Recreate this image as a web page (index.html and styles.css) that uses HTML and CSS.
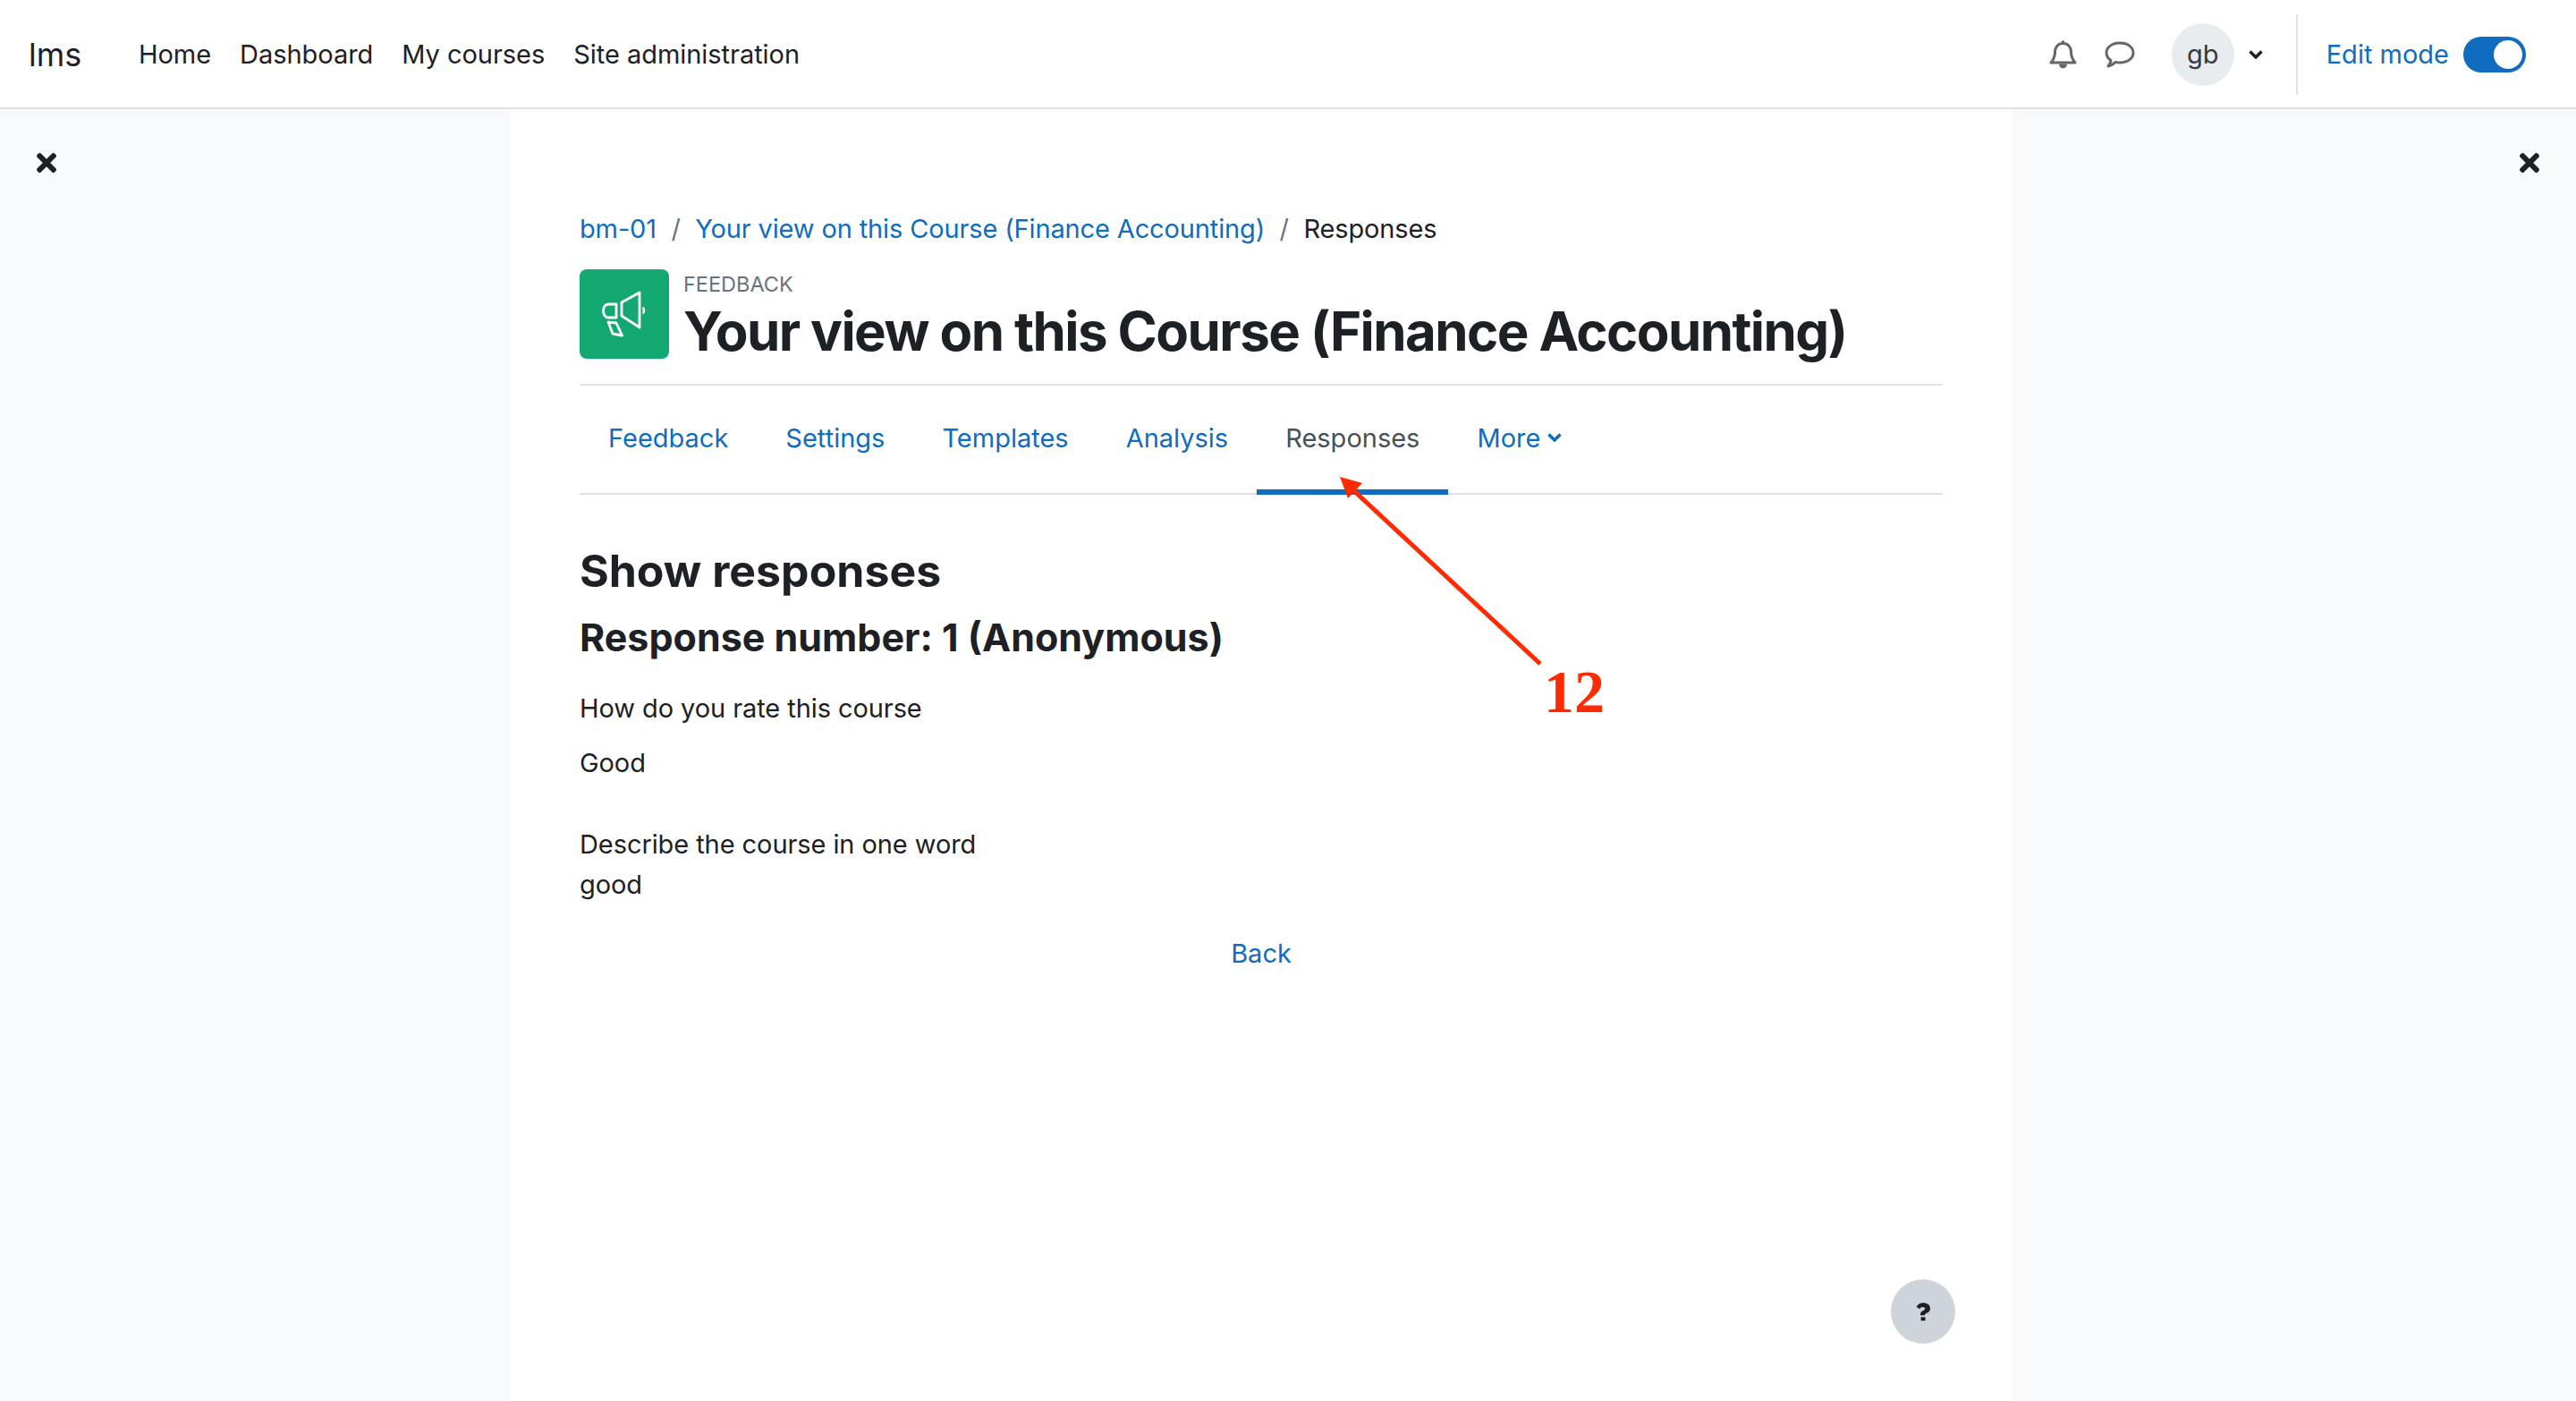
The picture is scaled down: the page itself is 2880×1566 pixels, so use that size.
FILE: index.html
```html
<!DOCTYPE html>
<html lang="en">
<head>
    <meta charset="UTF-8">
    <title>Your view on this Course (Finance Accounting)</title>
    <link rel="stylesheet" href="styles.css">
</head>
<body>
    <header class="navbar">
        <a class="brand">lms</a>
        <nav class="primary-nav">
            <a>Home</a>
            <a>Dashboard</a>
            <a>My courses</a>
            <a>Site administration</a>
        </nav>
        <div class="nav-right">
            <svg class="bell" viewBox="0 0 30 34"><path d="M15 1.500v3M15 4.500c-5.500 0-9 4-9 9.500 0 6-1.500 8.500-4.500 12h27c-3-3.500-4.500-6-4.500-12 0-5.500-3.500-9.500-9-9.500z" fill="none" stroke="#666" stroke-width="3" stroke-linejoin="round"/><path d="M10.500 27.500a4.500 5 0 0 0 9 0z" fill="#666"/></svg>
            <svg class="chat" viewBox="0 0 34 30"><path d="M17 2c8.500 0 15 4.600 15 11s-6.500 11-15 11c-1.700 0-3.300-.2-4.800-.6C10 25.600 7.500 27.300 4 28c1.500-1.800 2.700-3.800 3-6.500C3.900 19.500 2 16.500 2 13 2 6.600 8.500 2 17 2z" fill="none" stroke="#666" stroke-width="3" stroke-linejoin="round"/></svg>
            <div class="avatar">gb</div>
            <svg class="caret" viewBox="0 0 16 10"><path d="M1.500 1.500l6.500 6.500 6.500-6.500" fill="none" stroke="#1d2125" stroke-width="3.400"/></svg>
            <div class="divider"></div>
            <a class="edit-label">Edit mode</a>
            <div class="toggle"><span class="knob"></span></div>
        </div>
    </header>

    <div class="page">
        <aside class="drawer">
            <svg class="close-icon" viewBox="0 0 352 512"><path d="M242.720 256l100.070-100.070c12.280-12.280 12.280-32.190 0-44.480l-22.240-22.240c-12.280-12.280-32.190-12.280-44.480 0L176 189.280 75.930 89.210c-12.280-12.280-32.190-12.280-44.480 0L9.210 111.450c-12.280 12.280-12.280 32.190 0 44.480L109.280 256 9.210 356.070c-12.280 12.280-12.280 32.190 0 44.480l22.240 22.240c12.280 12.280 32.200 12.280 44.480 0L176 322.720l100.070 100.070c12.280 12.280 32.200 12.280 44.480 0l22.240-22.240c12.280-12.280 12.280-32.190 0-44.480L242.720 256z"/></svg>
        </aside>

        <main class="content">
            <div class="breadcrumb">
                <a>bm-01</a>
                <span class="sep">/</span>
                <a>Your view on this Course (Finance Accounting)</a>
                <span class="sep">/</span>
                <span>Responses</span>
            </div>

            <div class="page-header">
                <div class="activity-icon">
                    <svg viewBox="0 0 100 100" fill="none" stroke="#fff" stroke-width="2.800" stroke-linejoin="round">
                        <path d="M41 39H32a5.500 7.500 0 0 0 0 15h9z"/>
                        <path d="M47 37L67 26V65L47 52z"/>
                        <path d="M70.500 41.500a5 5 0 0 1 0 9z" fill="#fff" stroke="none"/>
                        <path d="M32 59l9 1 6.500 14-10.500-2z"/>
                    </svg>
                </div>
                <div class="header-text">
                    <div class="modtype">FEEDBACK</div>
                    <h1>Your view on this Course (Finance Accounting)</h1>
                </div>
            </div>

            <nav class="tabs">
                <a>Feedback</a>
                <a>Settings</a>
                <a>Templates</a>
                <a>Analysis</a>
                <a class="active">Responses</a>
                <a class="more">More
                    <svg viewBox="0 0 16 10"><path d="M1.500 1.500l6.500 6.500 6.500-6.500" fill="none" stroke="#0f6cbf" stroke-width="3.400"/></svg>
                </a>
            </nav>

            <h2>Show responses</h2>
            <h3>Response number: 1 (Anonymous)</h3>
            <p class="question">How do you rate this course</p>
            <p class="answer">Good</p>
            <p class="question-2">Describe the course in one word</p>
            <p class="answer-2">good</p>
            <div class="back"><a>Back</a></div>

            <button class="help">
                <svg viewBox="0 0 18 24"><path d="M9.300 1C4.900 1 2.300 3 .7 6.100l4 2.800c.9-1.700 2-2.600 3.900-2.600 1.500 0 2.800.8 2.800 2 0 1.200-1 1.700-2.400 2.500-1.700 1-3.400 2.200-3.400 5v1h5.500v-.6c0-1.400 4.700-2.300 6.300-5.200.5-.9.600-1.800.6-2.700C18 3.300 13.700 1 9.300 1zM6.300 19v4.500h5.500V19z" fill="#1d2125"/></svg>
            </button>

            <svg class="annotation-arrow" viewBox="0 0 260 240">
                <path d="M226 212L16 17" stroke="#ff2a00" stroke-width="5" fill="none"/>
                <path d="M2 3L27 10 11 27z" fill="#ff2a00"/>
            </svg>
            <div class="annotation-num">12</div>
        </main>

        <aside class="drawer drawer-right">
            <svg class="close-icon" viewBox="0 0 352 512"><path d="M242.720 256l100.070-100.070c12.280-12.280 12.280-32.190 0-44.480l-22.240-22.240c-12.280-12.280-32.190-12.280-44.480 0L176 189.280 75.930 89.210c-12.280-12.280-32.190-12.280-44.480 0L9.210 111.450c-12.280 12.280-12.280 32.190 0 44.480L109.280 256 9.210 356.070c-12.280 12.280-12.280 32.190 0 44.480l22.240 22.240c12.280 12.280 32.200 12.280 44.480 0L176 322.720l100.070 100.070c12.280 12.280 32.200 12.280 44.480 0l22.240-22.240c12.280-12.280 12.280-32.190 0-44.480L242.720 256z"/></svg>
        </aside>
    </div>
</body>
</html>
```

FILE: styles.css
```css
* { box-sizing: border-box; }
body {
    margin: 0;
    height: 1566px;
    overflow: hidden;
    font-family: Inter, "Liberation Sans", sans-serif;
    font-size: 29px;
    color: #1d2125;
    background: #fff;
}
a { color: #0f6cbf; text-decoration: none; }

/* top bar */
.navbar {
    height: 122px;
    border-bottom: 2px solid #dee2e6;
    display: flex;
    align-items: center;
    padding: 1px 32px 0;
}
.brand { font-size: 36px; color: #1d2125; width: 123px; }
.primary-nav { display: flex; gap: 32px; letter-spacing: -0.04px; }
.primary-nav a { color: #1d2125; }
.nav-right { margin-left: auto; display: flex; align-items: center; }
.bell { width: 31px; height: 34px; margin-right: 31px; }
.chat { width: 34px; height: 30px; margin-right: 41px; }
.avatar {
    width: 70px;
    height: 70px;
    border-radius: 50%;
    background: #e9ecef;
    color: #343a40;
    display: flex;
    align-items: center;
    justify-content: center;
    margin-right: 16px;
}
.caret { width: 16px; height: 10px; margin-right: 37px; }
.divider { width: 2px; height: 90px; background: #dee2e6; margin-right: 32px; }
.edit-label { margin-right: 16px; }
.toggle {
    width: 70px;
    height: 40px;
    border-radius: 20px;
    background: #0f6cbf;
    display: flex;
    align-items: center;
    justify-content: flex-end;
    padding-right: 4px;
    margin-right: 24px;
}
.knob { width: 32px; height: 32px; border-radius: 50%; background: #fff; }

/* page columns */
.page { display: flex; height: 1444px; }
.drawer {
    width: 570px;
    background: #f8f9fa;
    padding: 44px 0 0 41px;
}
.drawer-right {
    width: 630px;
    padding-left: 567px;
}
.close-icon { width: 22px; height: 32px; fill: #1d2125; display: block; }
.content {
    position: relative;
    flex: 1;
    padding: 116px 78px 0;
}

/* breadcrumb + heading */
.breadcrumb { display: flex; gap: 16.5px; line-height: 36px; height: 36px; letter-spacing: -0.14px; }
.sep { color: #6a737b; }
.page-header { display: flex; margin-top: 27px; }
.activity-icon {
    width: 100px;
    height: 100px;
    border-radius: 8px;
    background: #13a772;
    margin-right: 16px;
}
.activity-icon svg { width: 100px; height: 100px; display: block; }
.modtype { font-size: 23.5px; color: #6a737b; line-height: 28px; margin-top: 3px; }
h1 { margin: 0; font-size: 60px; font-weight: 700; line-height: 70px; margin-top: 3px; letter-spacing: -1.6px; }
.tabs {
    display: flex;
    margin-top: 24px;
    border-top: 2px solid #dee2e6;
    border-bottom: 2px solid #dee2e6;
    height: 124px;
}
.tabs a {
    padding: 0 32px;
    height: 122px;
    display: flex;
    align-items: center;
    gap: 8px;
    border-bottom: 6px solid transparent;
}
.tabs a.active { color: #495057; border-bottom-color: #0f6cbf; }
.more svg { width: 16px; height: 10px; }

/* response body */
h2 { margin: 0; padding-top: 55px; font-size: 50px; font-weight: 700; line-height: 60px; }
h3 { margin: 0; padding-top: 14px; font-size: 43px; font-weight: 700; line-height: 60px; }
p { margin: 0; line-height: 44px; letter-spacing: -0.08px; }
.question { margin-top: 28px; }
.answer { margin-top: 17px; }
.question-2 { margin-top: 47px; }
.answer-2 { margin-top: 1px; }
.back { text-align: center; margin-top: 33px; line-height: 44px; }

/* floating bits */
.help {
    position: absolute;
    left: 1544px;
    top: 1308px;
    width: 72px;
    height: 72px;
    border: 0;
    border-radius: 50%;
    background: #ced4da;
    display: flex;
    align-items: center;
    justify-content: center;
}
.help svg { width: 16px; height: 22px; }
.annotation-arrow {
    position: absolute;
    left: 926px;
    top: 408px;
    width: 260px;
    height: 240px;
}
.annotation-num {
    position: absolute;
    left: 1156px;
    top: 611px;
    font-family: "Liberation Serif", serif;
    font-weight: 700;
    font-size: 68px;
    line-height: 80px;
    color: #ff2a00;
}
```
